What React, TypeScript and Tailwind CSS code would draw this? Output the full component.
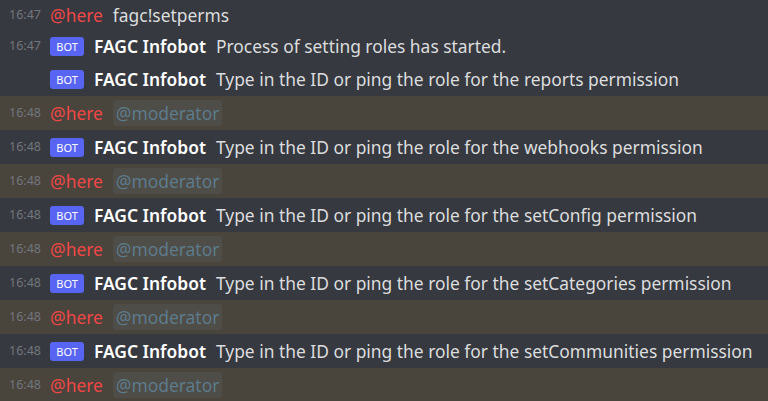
import React from "react";

type Row =
  | { kind: "user"; time: string; text: string }
  | { kind: "bot"; time?: string; text: string }
  | { kind: "mention"; time: string };

const rows: { r: Row; h: string }[] = [
  { r: { kind: "user", time: "16:47", text: "fagc!setperms" }, h: "h-[30px]" },
  { r: { kind: "bot", time: "16:47", text: "Process of setting roles has started." }, h: "h-[33px]" },
  { r: { kind: "bot", text: "Type in the ID or ping the role for the reports permission" }, h: "h-[33px]" },
  { r: { kind: "mention", time: "16:48" }, h: "h-[34px]" },
  { r: { kind: "bot", time: "16:48", text: "Type in the ID or ping the role for the webhooks permission" }, h: "h-[34px]" },
  { r: { kind: "mention", time: "16:48" }, h: "h-[34px]" },
  { r: { kind: "bot", time: "16:48", text: "Type in the ID or ping the role for the setConfig permission" }, h: "h-[34px]" },
  { r: { kind: "mention", time: "16:48" }, h: "h-[34px]" },
  { r: { kind: "bot", time: "16:48", text: "Type in the ID or ping the role for the setCategories permission" }, h: "h-[34px]" },
  { r: { kind: "mention", time: "16:48" }, h: "h-[34px]" },
  { r: { kind: "bot", time: "16:48", text: "Type in the ID or ping the role for the setCommunities permission" }, h: "h-[34px]" },
  { r: { kind: "mention", time: "16:48" }, h: "h-[34px]" },
];

function Time({ t }: { t?: string }) {
  return (
    <span className="w-[50px] shrink-0 pl-[9px] text-[12.5px] text-[#72767d]">{t ?? ""}</span>
  );
}

export default function App() {
  return (
    <div
      className="w-[768px] h-[401px] overflow-hidden bg-[#36393f] flex flex-col"
      style={{ fontFamily: '"Noto Sans", "Open Sans", sans-serif' }}
    >
      {rows.map(({ r, h }, i) => {
        if (r.kind === "mention") {
          return (
            <div key={i} className={`${h} shrink-0 flex items-center bg-[#49443c] whitespace-nowrap`}>
              <Time t={r.time} />
              <span className="text-[17.4px] text-[#f04747]">@here</span>
              <span className="ml-[10px] text-[17.4px] text-[#5d7b8b] bg-[#4e4d48] rounded-[3px] px-[3px]">@moderator</span>
            </div>
          );
        }
        if (r.kind === "user") {
          return (
            <div key={i} className={`${h} shrink-0 flex items-center whitespace-nowrap`}>
              <Time t={r.time} />
              <span className="text-[17.4px] text-[#f04747]">@here</span>
              <span className="ml-[10px] text-[17.4px] text-[#dcddde]">{r.text}</span>
            </div>
          );
        }
        return (
          <div key={i} className={`${h} shrink-0 flex items-center whitespace-nowrap`}>
            <Time t={r.time} />
            <span className="bg-[#5865f2] text-white text-[11px] rounded-[3px] h-[19px] w-[34px] flex items-center justify-center leading-none">BOT</span>
            <span className="ml-[10px] text-[17.4px] font-semibold text-white">FAGC Infobot</span>
            <span className="ml-[10px] text-[17.4px] text-[#dcddde]">{r.text}</span>
          </div>
        );
      })}
    </div>
  );
}
